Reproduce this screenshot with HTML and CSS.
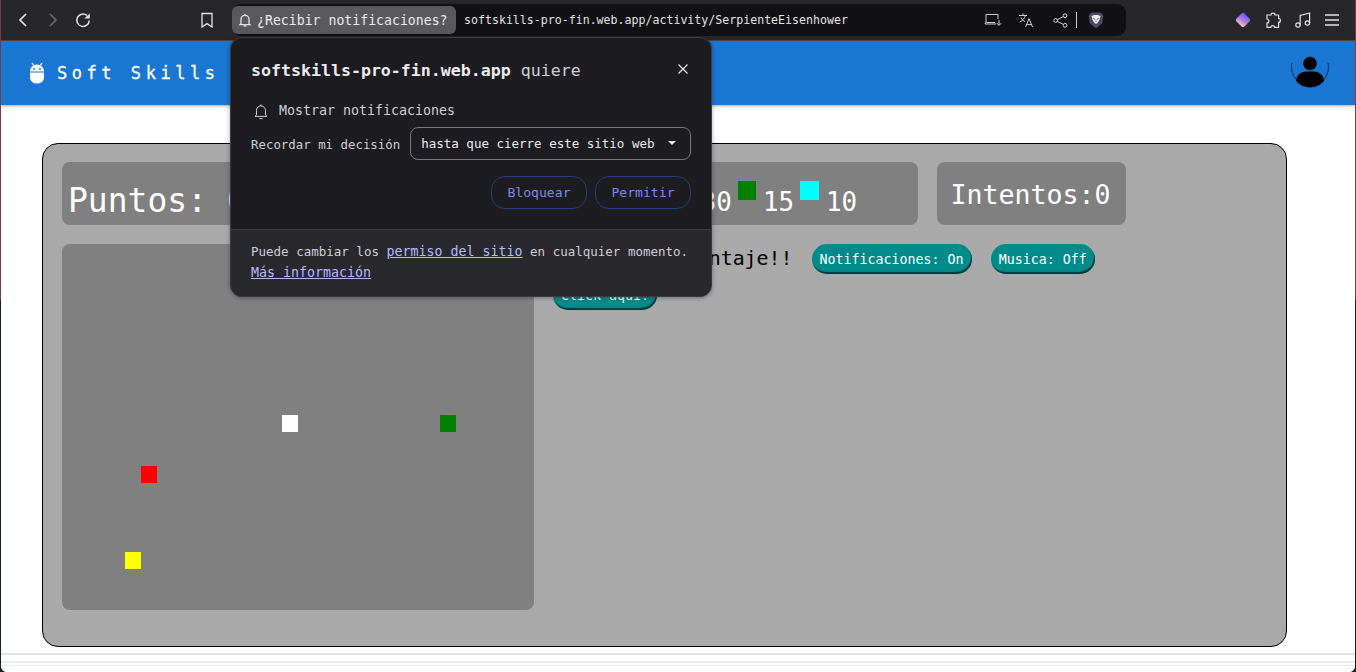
FILE: index.html
```html
<!DOCTYPE html>
<html lang="en">
  <head>
    <meta charset="UTF-8" />
    <meta name="viewport" content="width=device-width, initial-scale=1.0" />
    <title>Serpiente Eisenhower</title>
    <link rel="stylesheet" href="styles.css">
  </head>
  <body>
    <div id="window">
      <!-- browser toolbar -->
      <div id="toolbar">
        <div class="nav-icons">
          <svg width="16" height="16" viewBox="0 0 16 16"><path d="M11 2 L5 8 L11 14" class="ln"/></svg>
          <svg width="16" height="16" viewBox="0 0 16 16"><path d="M5 2 L11 8 L5 14" class="ln dim"/></svg>
          <svg width="16" height="16" viewBox="0 0 18 18"><path d="M16 9.5 A7 7 0 1 1 13.4 3.8" class="ln"/><path d="M10.4 7.4 L16.6 7.4 L16.6 1.6 Z" fill="#e4e4e6"/></svg>
        </div>
        <svg class="bookmark" width="14" height="16" viewBox="0 0 14 16"><path d="M2 1.5 H12 V15 L7 11.6 L2 15 Z" class="ln thin"/></svg>
        <div id="urlbar">
          <div id="chip">
            <svg width="14" height="15" viewBox="0 0 14 15"><path d="M3 10.6 V6.4 A4 4 0 0 1 11 6.4 V10.6 L12 11.6 H2 Z M5.6 13.2 H8.4 M7 1 V2.4" class="ln thin"/></svg>
            <span>¿Recibir notificaciones?</span>
          </div>
          <span id="url">softskills-pro-fin.web.app/activity/SerpienteEisenhower</span>
          <div class="url-icons">
            <svg width="18" height="14" viewBox="0 0 18 14"><path d="M12 11 H1 L2 9.5 V1.5 H14 V6 M2 9.5 H11 M15 7 V12 M12.8 10.2 L15 12.4 L17.2 10.2" class="ln hair"/></svg>
            <svg class="translate" width="16" height="16" viewBox="0 0 16 16"><path d="M1 3.5 H9 M5 1.5 V3.5 M7.4 3.5 C6.6 6.6 4.4 8.6 1.6 10 M2.8 5.4 C3.8 7.6 5.2 8.8 7 9.6 M7.6 15 L11 6.6 L14.6 15 M8.8 12.6 H13.4" class="ln hair"/></svg>
            <svg width="15" height="15" viewBox="0 0 15 15"><circle cx="2.7" cy="7.5" r="1.9" class="ln hair"/><circle cx="12" cy="2.7" r="1.9" class="ln hair"/><circle cx="12" cy="12.3" r="1.9" class="ln hair"/><path d="M4.4 6.6 L10.3 3.6 M4.4 8.4 L10.3 11.4" class="ln hair"/></svg>
            <span class="sep"></span>
            <svg width="16" height="19" viewBox="0 0 16 18"><path d="M3.4 1 H12.6 L15.2 3.6 L14.4 11.4 L8 17 L1.6 11.4 L0.8 3.6 Z" fill="#4b4b60"/><path d="M3.4 4.6 L6.4 3.6 H9.6 L12.6 4.6 L11.4 8.6 L9.4 11.4 L8 12.6 L6.6 11.4 L4.6 8.6 Z" fill="#efeff2"/><path d="M5.4 7 L7.2 7.8 M10.6 7 L8.8 7.8 M8 9 V10.4" stroke="#4b4b60" fill="none"/></svg>
          </div>
        </div>
        <div class="ext-icons">
          <svg width="18" height="18" viewBox="0 0 18 18"><defs><linearGradient id="gem" x1="0.4" y1="0" x2="0.6" y2="1"><stop offset="0" stop-color="#6f5cf6"/><stop offset="0.55" stop-color="#b07be8"/><stop offset="1" stop-color="#f7c2b0"/></linearGradient></defs><rect x="3.4" y="3.4" width="11.2" height="11.2" rx="2" transform="rotate(45 9 9)" fill="url(#gem)"/></svg>
          <svg width="17" height="17" viewBox="0 0 17 17"><path d="M6 3 C6 0.6 10 0.6 10 3 H13.6 V6.4 C16 6.4 16 10.4 13.6 10.4 V15.4 H9.6 C9.6 13 5.8 13 5.8 15.4 H2 V11 C4.4 11 4.4 7 2 7 V3 Z" class="ln soft"/></svg>
          <svg width="16" height="16" viewBox="0 0 16 16"><circle cx="3" cy="13" r="2.2" class="ln soft"/><circle cx="12.4" cy="11" r="2.2" class="ln soft"/><path d="M5.2 13 V3.4 L14.6 1 V11" class="ln soft"/></svg>
          <svg width="16" height="14" viewBox="0 0 16 14"><path d="M1 2 H15 M1 7 H15 M1 12 H15" class="ln thin"/></svg>
        </div>
      </div>

      <!-- the page -->
      <div id="page">
        <header id="appbar">
          <div class="brand">
            <svg width="16" height="22" viewBox="0 0 16 22"><path d="M1 9.5 A7 7 0 0 1 15 9.5 Z" fill="#fff"/><path d="M1 10.5 H15 V16 A7 5.5 0 0 1 1 16 Z" fill="#fff"/><path d="M3 1 L4.6 3.4 M13 1 L11.4 3.4" stroke="#fff" stroke-width="1.2"/><circle cx="5" cy="7" r="0.9" fill="#1976d2"/><circle cx="11" cy="7" r="0.9" fill="#1976d2"/></svg>
            <span>Soft Skills</span>
          </div>
          <svg class="avatar" width="38" height="38" viewBox="0 0 38 38"><path d="M1 13 A18.5 18.5 0 1 0 37 13" fill="none" stroke="#000" stroke-width="0.6"/><circle cx="19" cy="13.5" r="6.8" fill="#000"/><path d="M5 31 C5.5 25 10 21.5 15 21.5 H23 C28 21.5 32.5 25 33 31 A18.4 18.4 0 0 1 5 31 Z" fill="#000"/></svg>
        </header>

        <main id="board">
          <div class="score-row">
            <div class="panel puntos">Puntos: 0</div>
            <div class="panel colores">
              <span class="key red"></span><span>50</span>
              <span class="key yellow"></span><span>30</span>
              <span class="key green"></span><span>15</span>
              <span class="key cyan"></span><span>10</span>
            </div>
            <div class="panel intentos">Intentos:0</div>
          </div>
          <div class="game-row">
            <div id="canvas">
              <span class="cell white" style="left:220px;top:171px"></span>
              <span class="cell green" style="left:378px;top:171px"></span>
              <span class="cell red" style="left:79px;top:222px"></span>
              <span class="cell yellow" style="left:63px;top:308px"></span>
            </div>
            <div class="controls">
              <span class="msg">Gana mayor puntaje!!</span>
              <button class="pill">Notificaciones: On</button>
              <button class="pill">Musica: Off</button>
              <button class="pill">Click aquí!</button>
            </div>
          </div>
        </main>
        <div class="foot"></div>
      </div>

      <!-- permission prompt, lies over the page -->
      <div id="prompt">
        <div class="prompt-top">
          <div class="prompt-title">
            <span><b>softskills-pro-fin.web.app</b> quiere</span>
            <svg width="12" height="12" viewBox="0 0 12 12"><path d="M1.5 1.5 L10.5 10.5 M10.5 1.5 L1.5 10.5" class="ln thin"/></svg>
          </div>
          <div class="prompt-perm">
            <svg width="16" height="17" viewBox="0 0 16 17"><path d="M3.5 12 V7.4 A4.5 4.5 0 0 1 12.5 7.4 V12 L14 13.4 H2 Z M6.4 15.6 H9.6 M8 1.4 V2.8" class="ln hair"/></svg>
            <span>Mostrar notificaciones</span>
          </div>
          <div class="prompt-remember">
            <span class="remember-label">Recordar mi decisión</span>
            <div class="select">
              <span>hasta que cierre este sitio web</span>
              <i class="caret"></i>
            </div>
          </div>
          <div class="prompt-actions">
            <button>Bloquear</button>
            <button>Permitir</button>
          </div>
        </div>
        <div class="prompt-foot">
          Puede cambiar los <a href="#">permiso del sitio</a> en cualquier momento.<br />
          <a href="#">Más información</a>
        </div>
      </div>
    </div>
  </body>
</html>
```
FILE: styles.css
```css
html,
body {
  margin: 0;
  height: 100%;
  overflow: hidden;
}
body {
  background: linear-gradient(#7a3a4c 0 300px, #12202c 300px);
  font-family: "DejaVu Sans Mono", "Liberation Mono", monospace;
}
#window {
  position: relative;
  height: 672px;
  margin: 0 1px;
  display: flex;
  flex-direction: column;
  overflow: hidden;
  border-radius: 0 0 6px 6px;
}
.ln {
  fill: none;
  stroke: #e4e4e6;
  stroke-width: 1.7;
}
.ln.dim {
  stroke: #6a6a6e;
}
.ln.thin {
  stroke-width: 1.3;
}
.ln.hair {
  stroke: #d0d0d3;
  stroke-width: 1;
}
.ln.soft {
  stroke-width: 1.2;
}

/* toolbar */
#toolbar {
  height: 40px;
  background: #26262b;
  border-bottom: 1px solid #4a4a4e;
  display: flex;
  align-items: center;
  flex-shrink: 0;
}
.nav-icons {
  display: flex;
  align-items: center;
  gap: 14px;
  margin-left: 14px;
  width: 185px;
}
.bookmark {
  margin-right: 18px;
}
#urlbar {
  width: 894px;
  height: 32px;
  background: #111114;
  border-radius: 9px;
  display: flex;
  align-items: center;
}
#chip {
  height: 28px;
  width: 224px;
  padding-left: 6px;
  box-sizing: border-box;
  display: flex;
  align-items: center;
  gap: 5px;
  background: #59595d;
  border-radius: 6px;
  color: #ececee;
  font-size: 13.2px;
}
#url {
  margin-left: 8px;
  color: #e2e2e5;
  font-size: 11.6px;
}
.url-icons {
  display: flex;
  align-items: center;
  margin-left: auto;
  margin-right: 22px;
  gap: 16px;
}
.translate {
  margin-right: 3px;
}
.sep {
  width: 1px;
  height: 16px;
  background: #cfcfd2;
  margin: 0 -5px 0 -8px;
}
.ext-icons {
  display: flex;
  align-items: center;
  margin-left: 108px;
  gap: 13px;
}

/* page */
#page {
  flex: 1;
  background: #fff;
  display: flex;
  flex-direction: column;
}
#appbar {
  height: 64px;
  background: #1976d2;
  box-shadow: 0 1px 3px rgba(0, 0, 0, 0.35);
  display: flex;
  align-items: center;
  justify-content: space-between;
  padding: 0 26px 0 28px;
}
.brand {
  display: flex;
  align-items: center;
  gap: 12px;
  margin-top: -1px;
  color: #fff;
  font-size: 17px;
  letter-spacing: 4.54px;
  -webkit-text-stroke: 0.3px #fff;
}
.avatar {
  margin-top: -9px;
}
#board {
  box-sizing: border-box;
  width: 1245px;
  height: 504px;
  margin: 38px 0 0 41px;
  padding: 18px 19px;
  background: #a9a9a9;
  border: 1px solid #000;
  border-radius: 16px;
  display: flex;
  flex-direction: column;
  gap: 19px;
}
.score-row {
  display: flex;
  gap: 19px;
}
.panel {
  height: 63px;
  box-sizing: border-box;
  background: #808080;
  border-radius: 8px;
  color: #fff;
  display: flex;
  align-items: center;
}
.puntos {
  width: 193px;
  padding: 14px 0 0 6px;
  font-size: 33px;
  white-space: nowrap;
}
.colores {
  width: 644px;
  padding: 16px 61px 0 14px;
  font-size: 25.8px;
  justify-content: flex-end;
}
.key {
  width: 18px;
  height: 19px;
  margin: 5px 7px 0 6px;
  align-self: flex-start;
  margin-top: 3px;
}
.key.cyan {
  width: 19px;
}
.intentos {
  width: 189px;
  padding: 2px 2px 0 0;
  justify-content: center;
  font-size: 26.6px;
}
.red {
  background: #f00;
}
.yellow {
  background: #ff0;
}
.green {
  background: #008000;
}
.cyan {
  background: #0ff;
}
.white {
  background: #fff;
}
.game-row {
  display: flex;
  gap: 19px;
}
#canvas {
  position: relative;
  width: 472px;
  height: 366px;
  background: #808080;
  border-radius: 8px;
}
.cell {
  position: absolute;
  width: 16px;
  height: 17px;
}
.controls {
  flex: 1;
  display: flex;
  flex-wrap: wrap;
  align-items: flex-start;
  align-content: flex-start;
  column-gap: 19px;
  row-gap: 6px;
  max-width: 560px;
}
.msg {
  font-size: 19.9px;
  color: #000;
  line-height: 29px;
}
.pill {
  height: 30px;
  padding: 0 8px;
  background: #008b8b;
  border: 0;
  border-radius: 15px;
  box-shadow: inset -1px -2px 1px rgba(0, 0, 0, 0.6);
  color: #fff;
  font-family: inherit;
  font-size: 13.3px;
}
.foot {
  margin-top: 6px;
  height: 19px;
  border-top: 2px solid #e4e4e4;
  box-sizing: border-box;
  background: linear-gradient(#fff 0 6px, #ececec 6px 8px, #fff 8px 10px, #ececec 10px 11px, #fff 11px);
}

/* permission prompt */
#prompt {
  position: absolute;
  left: 229px;
  top: 37px;
  width: 482px;
  height: 260px;
  box-sizing: border-box;
  background: #1c1c21;
  border: 1px solid #3b3b40;
  border-radius: 12px;
  box-shadow: 0 1px 4px rgba(0, 0, 0, 0.35);
  display: flex;
  flex-direction: column;
  overflow: hidden;
  color: #d0d0d4;
}
.prompt-top {
  height: 191px;
  padding: 0 20px;
  border-bottom: 1px solid #3d3d42;
  flex-shrink: 0;
}
.prompt-title {
  display: flex;
  justify-content: space-between;
  align-items: center;
  padding-top: 23px;
  font-size: 16.6px;
  line-height: 20px;
}
.prompt-title b {
  color: #ececee;
}
.prompt-title svg {
  margin-top: -4px;
  margin-right: 2px;
}
.prompt-perm {
  display: flex;
  align-items: center;
  gap: 10px;
  margin-top: 20px;
  margin-left: 2px;
  font-size: 13.3px;
  line-height: 20px;
}
.prompt-remember {
  display: flex;
  align-items: center;
  gap: 10px;
  margin-top: 6px;
  font-size: 12.4px;
  white-space: nowrap;
}
.remember-label {
  margin-top: 2px;
}
.select {
  width: 281px;
  height: 33px;
  flex-shrink: 0;
  box-sizing: border-box;
  padding: 0 14px 0 10px;
  border: 1px solid #77777c;
  border-radius: 8px;
  display: flex;
  align-items: center;
  justify-content: space-between;
  color: #ececee;
  font-size: 12.5px;
}
.caret {
  width: 0;
  height: 0;
  margin-top: -2px;
  border-left: 4px solid transparent;
  border-right: 4px solid transparent;
  border-top: 4px solid #ececee;
}
.prompt-actions {
  display: flex;
  justify-content: flex-end;
  gap: 8px;
  margin-top: 16px;
}
.prompt-actions button {
  width: 96px;
  height: 33px;
  background: none;
  border: 1px solid #2f3a78;
  border-radius: 14px;
  color: #7c8ae8;
  font-family: inherit;
  font-size: 13.1px;
}
.prompt-foot {
  flex: 1;
  padding: 11px 20px 0;
  background: #28282d;
  font-size: 12.5px;
  line-height: 21px;
}
.prompt-foot a {
  color: #b5bcfa;
  font-size: 13.3px;
}
```
